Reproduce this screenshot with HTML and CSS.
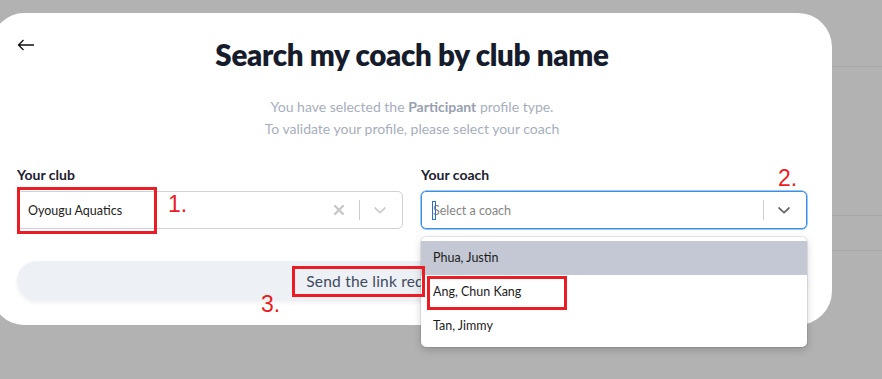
FILE: index.html
```html
<!DOCTYPE html>
<html lang="en">
<head>
  <meta charset="UTF-8">
  <meta name="viewport" content="width=device-width, initial-scale=1.0">
  <title>Search my coach</title>
  <link rel="stylesheet" href="styles.css">
</head>
<body>
  <div class="modal">
    <div class="modal-head">
      <button class="back" type="button" aria-label="Back">
        <svg width="18" height="12" viewBox="0 0 18 12" fill="none" stroke="#111" stroke-width="1.3">
          <path d="M17 6H1.5M6.5 1L1.5 6l5 5"/>
        </svg>
      </button>
      <h1 class="title">Search my coach by club name</h1>
      <span></span>
    </div>
    <p class="intro">
      You have selected the <b>Participant</b> profile type.<br>
      To validate your profile, please select your coach
    </p>

    <div class="fields">
      <div class="field">
        <label class="label">Your club</label>
        <div class="select">
          <span class="value">Oyougu Aquatics</span>
          <span class="icon clear">
            <svg width="20" height="20" viewBox="0 0 20 20"><path d="M6 6l8 8M14 6l-8 8" stroke="#c8c8c8" stroke-width="2.4" stroke-linecap="round"/></svg>
          </span>
          <span class="sep"></span>
          <span class="icon">
            <svg width="20" height="20" viewBox="0 0 20 20"><path fill="#ccc" d="M4.5 7.4c.4-.4.9-.4 1.3 0L10 11.5l4.2-4.1c.4-.4.9-.4 1.3 0 .4.4.4 1 0 1.3l-4.8 4.6c-.4.4-1 .4-1.3 0L4.5 8.7c-.4-.3-.4-.9 0-1.3z"/></svg>
          </span>
          <!-- annotation 1 -->
          <span class="mark mark-club"></span>
          <span class="note note-1">1.</span>
        </div>
      </div>

      <div class="field">
        <label class="label">Your coach</label>
        <div class="select focused">
          <span class="caret"></span>
          <span class="placeholder">Select a coach</span>
          <span class="sep"></span>
          <span class="icon">
            <svg width="20" height="20" viewBox="0 0 20 20"><path fill="#666" d="M4.5 7.4c.4-.4.9-.4 1.3 0L10 11.5l4.2-4.1c.4-.4.9-.4 1.3 0 .4.4.4 1 0 1.3l-4.8 4.6c-.4.4-1 .4-1.3 0L4.5 8.7c-.4-.3-.4-.9 0-1.3z"/></svg>
          </span>
          <span class="note note-2">2.</span>

          <ul class="menu">
            <li class="option active">Phua, Justin</li>
            <li class="option">Ang, Chun Kang<span class="mark mark-coach"></span></li>
            <li class="option">Tan, Jimmy</li>
          </ul>
        </div>
      </div>
    </div>

    <div class="send">
      <button class="send-btn" type="button">Send the link request to coach</button>
      <span class="mark mark-send"></span>
      <span class="note note-3">3.</span>
    </div>
  </div>
</body>
</html>
```

FILE: styles.css
```css
* {
  box-sizing: border-box;
}
body {
  margin: 0;
  padding-top: 13px;
  height: 379px;
  overflow: hidden;
  font-family: "Lato", "Noto Sans", sans-serif;
  background:
    linear-gradient(#a6a6a6, #a6a6a6) 0 66px / 100% 1px no-repeat,
    linear-gradient(#a6a6a6, #a6a6a6) 0 215px / 100% 1px no-repeat,
    linear-gradient(#a6a6a6, #a6a6a6) 0 250px / 100% 1px no-repeat,
    #b2b2b2;
}
.modal {
  margin-left: -8px;
  width: 840px;
  height: 312px;
  background: #fff;
  border-radius: 32px 34px 34px 32px;
  padding: 24px 25px 0;
}
.modal-head {
  display: grid;
  grid-template-columns: 1fr auto 1fr;
  align-items: start;
}
.back {
  justify-self: start;
  border: 0;
  background: none;
  padding: 0;
  margin-top: 2px;
  width: 18px;
  height: 12px;
  line-height: 0;
}
.title {
  margin: 0;
  font-size: 29.5px;
  line-height: 36px;
  font-weight: 800;
  color: #161c2b;
  letter-spacing: -0.3px;
}
.intro {
  margin: 23px 0 0;
  text-align: center;
  font-size: 14px;
  line-height: 22px;
  color: #a6aebd;
}
.intro b {
  font-weight: 700;
  color: #97a0b1;
}
.fields {
  display: grid;
  grid-template-columns: 1fr 1fr;
  column-gap: 18px;
  margin-top: 25px;
}
.label {
  display: block;
  font-size: 14px;
  line-height: 20px;
  font-weight: 700;
  color: #1c2130;
  margin-bottom: 6px;
}
.select {
  position: relative;
  display: flex;
  align-items: center;
  height: 38px;
  border: 1px solid #cfd2d8;
  border-radius: 5px;
  padding: 0 8px 0 10px;
  font-size: 12.5px;
}
.select.focused {
  border-color: #3b8ee8;
  box-shadow: 0 0 0 0.5px #3b8ee8;
}
.value {
  flex: 1;
  color: #222;
}
.placeholder {
  flex: 1;
  color: #858585;
}
.caret {
  width: 4px;
  height: 19px;
  border: 1px solid #2b6fd6;
  margin-right: -3px;
  position: relative;
  z-index: 1;
}
.icon {
  display: flex;
  width: 28px;
  justify-content: center;
}
.sep {
  width: 1px;
  height: 20px;
  background: #ccc;
  margin: 0 6px;
}
.menu {
  position: absolute;
  left: -1px;
  right: -1px;
  top: 45px;
  margin: 0;
  padding: 4px 0;
  list-style: none;
  background: #fff;
  border-radius: 5px;
  box-shadow: 0 0 0 1px rgba(0, 0, 0, 0.08), 0 3px 8px rgba(0, 0, 0, 0.18);
  z-index: 5;
}
.option {
  position: relative;
  height: 34px;
  line-height: 34px;
  padding-left: 12px;
  font-size: 12.5px;
  color: #1c1c1c;
}
.option.active {
  background: #c4c7d4;
}
.send {
  position: relative;
  margin-top: 32px;
}
.send-btn {
  display: block;
  width: 100%;
  height: 40px;
  border: 0;
  border-radius: 20px;
  background: #edf1f6;
  box-shadow: 0 2px 4px rgba(0, 0, 0, 0.06);
  font-family: inherit;
  font-size: 15.5px;
  letter-spacing: 0.2px;
  font-weight: 400;
  color: #3f495c;
}

/* red annotations drawn over the screenshot */
.mark {
  position: absolute;
  border: 3px solid #ec1c24;
  z-index: 6;
}
.mark-club {
  left: -1px;
  top: -5px;
  width: 140px;
  height: 47px;
}
.mark-coach {
  left: 6px;
  top: 1px;
  width: 140px;
  height: 34px;
}
.mark-send {
  left: 275px;
  top: 5px;
  width: 133px;
  height: 31px;
}
.note {
  position: absolute;
  font-family: "Liberation Sans", sans-serif;
  font-size: 23px;
  color: #ec1c24;
  line-height: 1;
}
.note-1 {
  left: 150px;
  top: 1px;
}
.note-2 {
  left: 356px;
  top: -25px;
}
.note-3 {
  left: 244px;
  top: 32px;
}
```
